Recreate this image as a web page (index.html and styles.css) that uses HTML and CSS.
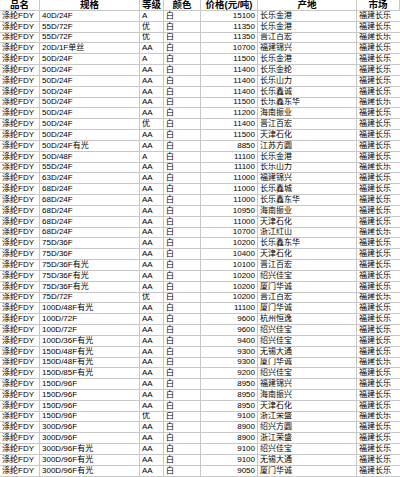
FILE: index.html
```html
<!DOCTYPE html>
<html lang="zh">
<head>
<meta charset="utf-8">
<title>涤纶FDY 价格</title>
<link rel="stylesheet" href="styles.css">
</head>
<body>
<div class="sheet">
  <div class="c h">品名</div><div class="c h">规格</div><div class="c h">等级</div><div class="c h">颜色</div><div class="c h">价格(元/吨)</div><div class="c h">产地</div><div class="c h">市场</div>

  <div class="c">涤纶FDY</div><div class="c">40D/24F</div><div class="c">A</div><div class="c">白</div><div class="c n">15100</div><div class="c">长乐金港</div><div class="c m">福建长乐</div>
  <div class="c">涤纶FDY</div><div class="c">55D/72F</div><div class="c">优</div><div class="c">白</div><div class="c n">11350</div><div class="c">长乐金港</div><div class="c m">福建长乐</div>
  <div class="c">涤纶FDY</div><div class="c">55D/72F</div><div class="c">优</div><div class="c">白</div><div class="c n">11350</div><div class="c">晋江百宏</div><div class="c m">福建长乐</div>
  <div class="c">涤纶FDY</div><div class="c">20D/1F单丝</div><div class="c">AA</div><div class="c">白</div><div class="c n">10700</div><div class="c">福建锦兴</div><div class="c m">福建长乐</div>
  <div class="c">涤纶FDY</div><div class="c">50D/24F</div><div class="c">A</div><div class="c">白</div><div class="c n">11500</div><div class="c">长乐金港</div><div class="c m">福建长乐</div>
  <div class="c">涤纶FDY</div><div class="c">50D/24F</div><div class="c">AA</div><div class="c">白</div><div class="c n">11400</div><div class="c">长乐金纶</div><div class="c m">福建长乐</div>
  <div class="c">涤纶FDY</div><div class="c">50D/24F</div><div class="c">AA</div><div class="c">白</div><div class="c n">11400</div><div class="c">长乐山力</div><div class="c m">福建长乐</div>
  <div class="c">涤纶FDY</div><div class="c">50D/24F</div><div class="c">AA</div><div class="c">白</div><div class="c n">11400</div><div class="c">长乐鑫诚</div><div class="c m">福建长乐</div>
  <div class="c">涤纶FDY</div><div class="c">50D/24F</div><div class="c">AA</div><div class="c">白</div><div class="c n">11500</div><div class="c">长乐鑫东华</div><div class="c m">福建长乐</div>
  <div class="c">涤纶FDY</div><div class="c">50D/24F</div><div class="c">AA</div><div class="c">白</div><div class="c n">11200</div><div class="c">海南振业</div><div class="c m">福建长乐</div>
  <div class="c">涤纶FDY</div><div class="c">50D/24F</div><div class="c">优</div><div class="c">白</div><div class="c n">11400</div><div class="c">晋江百宏</div><div class="c m">福建长乐</div>
  <div class="c">涤纶FDY</div><div class="c">50D/24F</div><div class="c">AA</div><div class="c">白</div><div class="c n">11500</div><div class="c">天津石化</div><div class="c m">福建长乐</div>
  <div class="c">涤纶FDY</div><div class="c">50D/24F有光</div><div class="c">AA</div><div class="c">白</div><div class="c n">8850</div><div class="c">江苏方圆</div><div class="c m">福建长乐</div>
  <div class="c">涤纶FDY</div><div class="c">50D/48F</div><div class="c">A</div><div class="c">白</div><div class="c n">11100</div><div class="c">长乐金港</div><div class="c m">福建长乐</div>
  <div class="c">涤纶FDY</div><div class="c">55D/24F</div><div class="c">AA</div><div class="c">白</div><div class="c n">11100</div><div class="c">长乐山力</div><div class="c m">福建长乐</div>
  <div class="c">涤纶FDY</div><div class="c">63D/24F</div><div class="c">AA</div><div class="c">白</div><div class="c n">11000</div><div class="c">福建锦兴</div><div class="c m">福建长乐</div>
  <div class="c">涤纶FDY</div><div class="c">68D/24F</div><div class="c">AA</div><div class="c">白</div><div class="c n">11000</div><div class="c">长乐鑫城</div><div class="c m">福建长乐</div>
  <div class="c">涤纶FDY</div><div class="c">68D/24F</div><div class="c">AA</div><div class="c">白</div><div class="c n">11000</div><div class="c">长乐鑫东华</div><div class="c m">福建长乐</div>
  <div class="c">涤纶FDY</div><div class="c">68D/24F</div><div class="c">AA</div><div class="c">白</div><div class="c n">10950</div><div class="c">海南振业</div><div class="c m">福建长乐</div>
  <div class="c">涤纶FDY</div><div class="c">68D/24F</div><div class="c">AA</div><div class="c">白</div><div class="c n">11000</div><div class="c">天津石化</div><div class="c m">福建长乐</div>
  <div class="c">涤纶FDY</div><div class="c">68D/24F</div><div class="c">AA</div><div class="c">白</div><div class="c n">10700</div><div class="c">浙江红山</div><div class="c m">福建长乐</div>
  <div class="c">涤纶FDY</div><div class="c">75D/36F</div><div class="c">AA</div><div class="c">白</div><div class="c n">10200</div><div class="c">长乐鑫东华</div><div class="c m">福建长乐</div>
  <div class="c">涤纶FDY</div><div class="c">75D/36F</div><div class="c">AA</div><div class="c">白</div><div class="c n">10400</div><div class="c">天津石化</div><div class="c m">福建长乐</div>
  <div class="c">涤纶FDY</div><div class="c">75D/36F有光</div><div class="c">AA</div><div class="c">白</div><div class="c n">10100</div><div class="c">晋江百宏</div><div class="c m">福建长乐</div>
  <div class="c">涤纶FDY</div><div class="c">75D/36F有光</div><div class="c">AA</div><div class="c">白</div><div class="c n">10200</div><div class="c">绍兴佳宝</div><div class="c m">福建长乐</div>
  <div class="c">涤纶FDY</div><div class="c">75D/36F有光</div><div class="c">AA</div><div class="c">白</div><div class="c n">10200</div><div class="c">厦门华诚</div><div class="c m">福建长乐</div>
  <div class="c">涤纶FDY</div><div class="c">75D/72F</div><div class="c">优</div><div class="c">白</div><div class="c n">10200</div><div class="c">晋江百宏</div><div class="c m">福建长乐</div>
  <div class="c">涤纶FDY</div><div class="c">100D/48F有光</div><div class="c">AA</div><div class="c">白</div><div class="c n">11100</div><div class="c">厦门华诚</div><div class="c m">福建长乐</div>
  <div class="c">涤纶FDY</div><div class="c">100D/72F</div><div class="c">AA</div><div class="c">白</div><div class="c n">9600</div><div class="c">杭州恒逸</div><div class="c m">福建长乐</div>
  <div class="c">涤纶FDY</div><div class="c">100D/72F</div><div class="c">AA</div><div class="c">白</div><div class="c n">9600</div><div class="c">绍兴佳宝</div><div class="c m">福建长乐</div>
  <div class="c">涤纶FDY</div><div class="c">100D/36F有光</div><div class="c">AA</div><div class="c">白</div><div class="c n">9400</div><div class="c">绍兴佳宝</div><div class="c m">福建长乐</div>
  <div class="c">涤纶FDY</div><div class="c">150D/48F有光</div><div class="c">AA</div><div class="c">白</div><div class="c n">9300</div><div class="c">无锡大通</div><div class="c m">福建长乐</div>
  <div class="c">涤纶FDY</div><div class="c">150D/48F有光</div><div class="c">AA</div><div class="c">白</div><div class="c n">9300</div><div class="c">厦门华诚</div><div class="c m">福建长乐</div>
  <div class="c">涤纶FDY</div><div class="c">150D/85F有光</div><div class="c">AA</div><div class="c">白</div><div class="c n">9200</div><div class="c">绍兴佳宝</div><div class="c m">福建长乐</div>
  <div class="c">涤纶FDY</div><div class="c">150D/96F</div><div class="c">AA</div><div class="c">白</div><div class="c n">8950</div><div class="c">福建锦兴</div><div class="c m">福建长乐</div>
  <div class="c">涤纶FDY</div><div class="c">150D/96F</div><div class="c">AA</div><div class="c">白</div><div class="c n">8950</div><div class="c">海南振兴</div><div class="c m">福建长乐</div>
  <div class="c">涤纶FDY</div><div class="c">150D/96F</div><div class="c">AA</div><div class="c">白</div><div class="c n">8950</div><div class="c">天津石化</div><div class="c m">福建长乐</div>
  <div class="c">涤纶FDY</div><div class="c">150D/96F</div><div class="c">优</div><div class="c">白</div><div class="c n">9100</div><div class="c">浙江荣盛</div><div class="c m">福建长乐</div>
  <div class="c">涤纶FDY</div><div class="c">300D/96F</div><div class="c">AA</div><div class="c">白</div><div class="c n">8900</div><div class="c">绍兴方圆</div><div class="c m">福建长乐</div>
  <div class="c">涤纶FDY</div><div class="c">300D/96F</div><div class="c">AA</div><div class="c">白</div><div class="c n">8900</div><div class="c">浙江荣盛</div><div class="c m">福建长乐</div>
  <div class="c">涤纶FDY</div><div class="c">300D/96F有光</div><div class="c">AA</div><div class="c">白</div><div class="c n">9100</div><div class="c">绍兴佳宝</div><div class="c m">福建长乐</div>
  <div class="c">涤纶FDY</div><div class="c">300D/96F有光</div><div class="c">AA</div><div class="c">白</div><div class="c n">9100</div><div class="c">无锡大通</div><div class="c m">福建长乐</div>
  <div class="c">涤纶FDY</div><div class="c">300D/96F有光</div><div class="c">AA</div><div class="c">白</div><div class="c n">9050</div><div class="c">厦门华诚</div><div class="c m">福建长乐</div>
</div>
</body>
</html>
```

FILE: styles.css
```css
html, body {
  margin: 0;
  padding: 0;
  background: #ffffff;
}

.sheet {
  display: grid;
  grid-template-columns: 40px 100px 24px 37px 57px 99px 43px;
  grid-template-rows: 11px;
  grid-auto-rows: 10.84px;
  width: 400px;
  font-family: "Liberation Sans", "Noto Sans CJK SC", sans-serif;
  font-size: 8px;
  color: #000000;
}

.c {
  box-sizing: border-box;
  border-right: 1px solid #c8c8c8;
  border-bottom: 1px solid #c8c8c8;
  padding: 0 2px;
  line-height: 10px;
  white-space: nowrap;
  overflow: hidden;
  display: flex;
  align-items: flex-end;
}

.h {
  justify-content: center;
  font-weight: bold;
  font-size: 9.5px;
  line-height: 10px;
  align-items: center;
}

.n {
  justify-content: flex-end;
}

.m {
  border-right: none;
}
```
